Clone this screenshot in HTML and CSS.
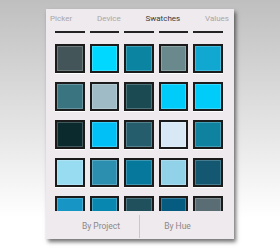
FILE: index.html
```html
<!DOCTYPE html>
<html>
<head>
<meta charset="utf-8">
<link rel="stylesheet" href="styles.css">
</head>
<body>
<div class="panel">
  <div class="tabs">
    <span class="tab">Picker</span>
    <span class="tab">Device</span>
    <span class="tab active">Swatches</span>
    <span class="tab">Values</span>
  </div>
  <div class="list">
    <div class="lines">
      <i></i><i></i><i></i><i></i><i></i>
    </div>
    <div class="grid">
      <div class="sw" style="background:#435558"></div>
      <div class="sw" style="background:#00d8ff"></div>
      <div class="sw" style="background:#0a84a0"></div>
      <div class="sw" style="background:#6a898c"></div>
      <div class="sw" style="background:#10a8d0"></div>

      <div class="sw" style="background:#3a7480"></div>
      <div class="sw" style="background:#9fbcc6"></div>
      <div class="sw" style="background:#1c4a52"></div>
      <div class="sw" style="background:#00ccfa"></div>
      <div class="sw" style="background:#00ccfa"></div>

      <div class="sw" style="background:#0b2a2e"></div>
      <div class="sw" style="background:#00c0f6"></div>
      <div class="sw" style="background:#255d6c"></div>
      <div class="sw" style="background:#d8e9f5"></div>
      <div class="sw" style="background:#0f829f"></div>

      <div class="sw" style="background:#98dcf2"></div>
      <div class="sw" style="background:#2c8fb0"></div>
      <div class="sw" style="background:#06789c"></div>
      <div class="sw" style="background:#92d2e8"></div>
      <div class="sw" style="background:#135870"></div>

      <div class="sw" style="background:#1796c6"></div>
      <div class="sw" style="background:#0888b0"></div>
      <div class="sw" style="background:#1f505c"></div>
      <div class="sw" style="background:#055c80"></div>
      <div class="sw" style="background:#5b6d74"></div>
    </div>
  </div>
  <div class="bar">
    <div class="btn">By Project</div>
    <div class="btn sep">By Hue</div>
  </div>
</div>
</body>
</html>
```

FILE: styles.css
```css
html, body {
  margin: 0;
  padding: 0;
}
body {
  width: 280px;
  height: 250px;
  overflow: hidden;
  background: linear-gradient(to bottom, #bfbfbf 0px, #ffffff 218px, #ffffff 250px);
  font-family: Roboto, "Liberation Sans", sans-serif;
}
.panel {
  margin: 9px 0 0 46px;
  width: 188px;
  height: 230px;
  background: #eeeaed;
  box-shadow: 2px 3px 4px rgba(0, 0, 0, 0.55);
  display: flex;
  flex-direction: column;
}
.tabs {
  height: 18px;
  display: flex;
  justify-content: space-between;
  align-items: center;
  padding: 0 5px 0 4px;
  font-size: 8px;
  color: #aaa6a8;
}
.tab.active {
  color: #3a3a3a;
}
.list {
  height: 184px;
  overflow: hidden;
  padding-top: 4px;
  box-sizing: border-box;
}
.lines {
  display: grid;
  grid-template-columns: repeat(5, 29.5px);
  column-gap: 5px;
  padding-left: 9px;
  height: 2px;
}
.lines i {
  display: block;
  height: 2px;
  background: #232323;
}
.grid {
  display: grid;
  grid-template-columns: repeat(5, 29.5px);
  grid-auto-rows: 28.5px;
  column-gap: 5px;
  row-gap: 9.5px;
  padding-left: 9px;
  margin-top: 11px;
}
.sw {
  box-sizing: border-box;
  border: 2px solid #1b1b1b;
  box-shadow: inset 0 0 0 1px rgba(255, 255, 255, 0.22), 0 1px 0 #ffffff;
}
.bar {
  flex: 1;
  display: grid;
  grid-template-columns: 76px 76px;
  padding-left: 17px;
  align-items: center;
  font-size: 8.5px;
  color: #8c888a;
}
.btn {
  text-align: center;
  line-height: 23px;
  margin-top: 3px;
}
.btn.sep {
  border-left: 1px solid #cbc7c9;
}
```
